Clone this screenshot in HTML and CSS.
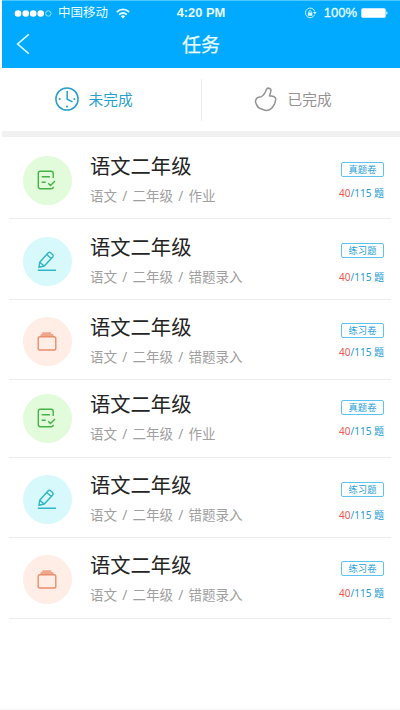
FILE: index.html
```
<!DOCTYPE html>
<html lang="zh-CN">
<head>
<meta charset="utf-8">
<title>任务</title>
<link rel="stylesheet" href="styles.css">
</head>
<body>
<svg class="defs" width="0" height="0">
  <symbol id="paper" viewBox="0 0 24 24"><path d="M18.2 10V5.4Q18.2 3.3 16 3.3H5.3Q3.3 3.3 3.3 5.4V18.6Q3.3 20.7 5.3 20.7H16Q18.2 20.7 18.2 18.8M6.7 8.7H15M6.7 14.2H10.7M13.2 15.2L15.5 17.5L20 13"/></symbol>
  <symbol id="pencil" viewBox="0 0 24 24"><path d="M4.7 13.3L13 4Q14.2 2.8 15.6 3.8L17.6 5.6Q18.6 6.8 17.7 8L9.2 17L4 18.3ZM11.8 5.6L16.2 9.5M4.7 13.3L9.2 17M2.8 21.2H21"/></symbol>
  <symbol id="box" viewBox="0 0 24 24"><path fill="currentColor" fill-opacity=".75" stroke="none" d="M7.3 3.3H16.2V5H18L19 7.6H5L6 5H7.3Z"/><rect x="3.2" y="7.8" width="17.6" height="13.2" rx="1.8"/></symbol>
</svg>
<div class="app">
  <header class="header">
    <div class="status">
      <div class="carrier">
        <svg width="38" height="9" viewBox="0 0 38 9"><g fill="#fff"><circle cx="4" cy="4.5" r="3.3"/><circle cx="11.7" cy="4.5" r="3.3"/><circle cx="19.2" cy="4.5" r="3.3"/><circle cx="26.7" cy="4.5" r="3.3"/></g><circle cx="34.3" cy="4.5" r="2.7" fill="none" stroke="#b5f1ff" stroke-width=".8"/></svg>
        <span class="operator">中国移动</span>
        <svg width="14" height="11" viewBox="0 0 14 11" fill="none" stroke="#e6fbff" stroke-width="1.8"><path d="M.8 4Q7-1.2 13.2 4M3.2 6.6Q7 3.4 10.8 6.6"/><path fill="#e6fbff" stroke="none" d="M4.8 8.2Q7 6.4 9.2 8.2L7 10.5Z"/></svg>
      </div>
      <span class="time">4:20 PM</span>
      <div class="power">
        <svg width="13" height="12" viewBox="0 0 13 12" fill="none" stroke="#c5f3ff"><path d="M10.6 7.8A4.8 4.8 0 1 1 10.8 4.5"/><path fill="#dff8ff" stroke="none" d="M9 5H12.8L10.9 7.3ZM3.9 5.5H8.3V8.8H3.9Z"/><path d="M4.8 5.5V4.5Q6.1 2.4 7.4 4.5V5.5"/></svg>
        <span class="percent">100%</span>
        <svg width="27" height="10" viewBox="0 0 27 10"><rect x=".3" y=".2" width="24.4" height="9.6" rx="1.5" fill="#fff"/><path d="M25.3 3.3Q27.8 5 25.3 6.7Z" fill="#fff"/></svg>
      </div>
    </div>
    <div class="nav">
      <svg class="back" width="14" height="22" viewBox="0 0 14 22" fill="none" stroke="#d9fbff" stroke-width="1.6"><path d="M12.8 1.3L1.6 11L12.8 20.7"/></svg>
      <h1>任务</h1>
    </div>
  </header>
  <nav class="tabs">
    <div class="tab active">
      <svg width="26" height="26" viewBox="0 0 26 26" fill="none" stroke="currentColor" stroke-width="1.5"><circle cx="13" cy="13" r="11.1"/><path d="M13.2 5V13.2L18.5 15.8"/><g fill="currentColor" stroke="none"><circle cx="5.7" cy="13" r="1"/><circle cx="20.4" cy="13" r="1"/><circle cx="13" cy="20.4" r="1"/></g></svg>
      <span>未完成</span>
    </div>
    <div class="tab">
      <svg width="26" height="26" viewBox="0 0 26 26" fill="none" stroke="currentColor" stroke-width="1.5" stroke-linejoin="round"><path d="M8.5 10.6C11.3 9.2 12.4 6.4 13.4 3.6C14.2 1.2 18.3 1.9 17.9 4.9C17.7 6.7 16.9 8.2 16.5 10C18.6 9.8 21.9 10 22.6 12.3C23 13.6 22.4 14.6 22.2 15.6C22 17 21.7 18 20.9 19C20.2 20 19.7 21 18.8 22.1C17.5 23.6 15.8 24.4 13.5 24.5C11.3 24.5 9.8 23.3 8.4 22.9C6.2 22.5 4.6 21.5 4 19.6C3.6 18.2 2.5 17 2.5 15.4C2.4 13.9 3.2 13.1 4 12C5 10.7 7 11.2 8.5 10.6Z"/></svg>
      <span>已完成</span>
    </div>
  </nav>
  <main class="list">
    <article class="row r1"><div class="badge green"><svg><use href="#paper"/></svg></div><div class="text"><h2>语文二年级</h2><p>语文 / 二年级 / 作业</p></div><div class="side"><span class="tag">真题卷</span><span class="count"><b>40</b>/115 题</span></div></article>
    <article class="row r2"><div class="badge cyan"><svg><use href="#pencil"/></svg></div><div class="text"><h2>语文二年级</h2><p>语文 / 二年级 / 错题录入</p></div><div class="side"><span class="tag">练习题</span><span class="count"><b>40</b>/115 题</span></div></article>
    <article class="row r3"><div class="badge orange"><svg><use href="#box"/></svg></div><div class="text"><h2>语文二年级</h2><p>语文 / 二年级 / 错题录入</p></div><div class="side"><span class="tag">练习卷</span><span class="count"><b>40</b>/115 题</span></div></article>
    <article class="row r4"><div class="badge green"><svg><use href="#paper"/></svg></div><div class="text"><h2>语文二年级</h2><p>语文 / 二年级 / 作业</p></div><div class="side"><span class="tag">真题卷</span><span class="count"><b>40</b>/115 题</span></div></article>
    <article class="row r5"><div class="badge cyan"><svg><use href="#pencil"/></svg></div><div class="text"><h2>语文二年级</h2><p>语文 / 二年级 / 错题录入</p></div><div class="side"><span class="tag">练习题</span><span class="count"><b>40</b>/115 题</span></div></article>
    <article class="row r6"><div class="badge orange"><svg><use href="#box"/></svg></div><div class="text"><h2>语文二年级</h2><p>语文 / 二年级 / 错题录入</p></div><div class="side"><span class="tag">练习卷</span><span class="count"><b>40</b>/115 题</span></div></article>
  </main>
</div>
</body>
</html>
```
FILE: styles.css
```
* { box-sizing: border-box; margin: 0; padding: 0; }
html, body { width: 400px; height: 710px; overflow: hidden; background: #fff; }
body { font-family: "Noto Sans", "Noto Sans CJK SC", sans-serif; }
svg { display: block; flex: none; }
.defs { position: absolute; }
.app { height: 710px; padding: 0 0 0 2px; border-bottom: 1px solid #f5f5f5; }
.header { height: 68px; background: #02aaff; border-top: 1px solid #4cc8ff; color: #e9fcff; }
.status { height: 24px; display: grid; grid-template-columns: 1fr auto 1fr; align-items: center; padding: 0 12px; font: 12.5px/24px "Liberation Sans", "Noto Sans CJK SC", sans-serif; }
.carrier { display: flex; align-items: center; }
.operator { margin: 0 8px 0 6px; }
.time { font-weight: 700; font-size: 12.9px; }
.power { display: flex; align-items: center; justify-content: flex-end; }
.percent { margin: 0 4px 0 7px; font-size: 13px; -webkit-text-stroke: .3px currentColor; }
.nav { height: 43px; display: grid; grid-template-columns: 40px 1fr 40px; align-items: center; padding: 0 2px 4px; }
.back { margin: -2px 0 0 12px; }
.nav h1 { text-align: center; font-size: 19px; line-height: 30px; font-weight: 400; -webkit-text-stroke: .25px currentColor; }
.tabs { height: 69px; display: flex; padding-bottom: 2px; border-bottom: 6px solid #f1f1f1; }
.tab { flex: 1; display: flex; align-items: center; gap: 9px; padding-left: 51.5px; color: #939393; font-size: 14.7px; line-height: 24px; }
.tab + .tab { position: relative; }
.tab + .tab::before { content: ""; position: absolute; left: 0; top: 11px; height: 42px; border-left: 1px solid #ececec; }
.tab.active { color: #289fce; }
.row { --top: 42px; --tag: 26px; --gap: 9px; height: 80px; margin: 0 9px 0 7px; border-bottom: 1px solid #ededed; display: flex; align-items: flex-start; padding-left: 14px; }
.badge { flex: none; width: 49px; height: 49px; border-radius: 50%; display: grid; place-items: center; margin-top: calc(var(--top) - 24px); padding: 0 1px 1px 0; }
.badge svg { width: 24px; height: 24px; fill: none; stroke: currentColor; stroke-width: 1.4; }
.green { color: #44b449; background: #e2fbda; }
.cyan { color: #32b5c6; background: #d8f9fb; }
.orange { color: #e98d6c; background: #ffede6; }
.text { margin: calc(var(--top) - 29px) 0 0 18px; white-space: nowrap; }
.text h2 { font-size: 20.3px; line-height: 30px; font-weight: 400; color: #242424; }
.text p { font-size: 13.5px; line-height: 20px; margin-top: 5px; color: #a0a0a0; word-spacing: 1.75px; }
.side { margin: var(--tag) 0 0 auto; display: flex; flex-direction: column; align-items: flex-end; width: 80px; padding-right: 7px; white-space: nowrap; }
.tag { width: 43px; height: 15px; border: 1px solid #5ec3ef; border-radius: 2px; text-align: center; font-size: 9.3px; line-height: 13px; color: #279fd8; }
.count { margin-top: var(--gap); font-size: 10px; line-height: 15px; color: #239bd2; }
.count b { font-weight: 400; color: #f05a50; }
.r1 { height: 82px; --top: 43px; --tag: 25px; --gap: 9px; }
.r2 { height: 81px; --tag: 24px; --gap: 12px; }
.r3 { --top: 41px; --tag: 23px; --gap: 7px; }
.r4 { height: 78px; --top: 38px; --tag: 20px; --gap: 9px; }
.r5 { --top: 41px; --tag: 24px; --gap: 11px; }
.r6 { height: 81px; --top: 41px; --tag: 23px; --gap: 10px; }
```
